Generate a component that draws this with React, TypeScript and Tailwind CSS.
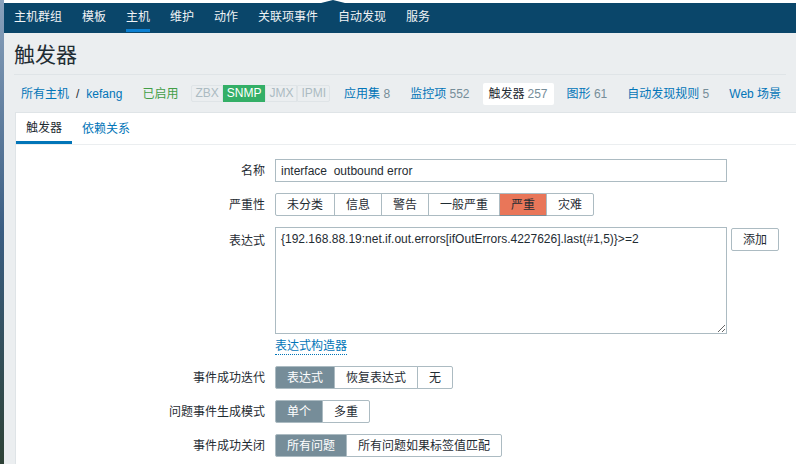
const font = "font-['Liberation_Sans','Noto_Sans_CJK_SC',sans-serif]";

const menu = ["主机群组", "模板", "主机", "维护", "动作", "关联项事件", "自动发现", "服务"];

const Segmented = ({ items, active, activeClass }: { items: string[]; active: number; activeClass: string }) => (
  <div className="flex h-[23px]">
    {items.map((it, i) => (
      <div
        key={it}
        className={
          "flex items-center px-[11px] border border-[#acbbc2] -ml-px first:ml-0 first:rounded-l-[2px] last:rounded-r-[2px] " +
          (i === active ? activeClass : "bg-white text-[#1f2c33]")
        }
      >
        {it}
      </div>
    ))}
  </div>
);

const Row = ({ label, children, top }: { label: string; children: React.ReactNode; top?: boolean }) => (
  <div className={"flex " + (top ? "items-start" : "items-center")}>
    <div className={"w-[249px] text-right text-[#1f2c33] " + (top ? "pt-[5px]" : "")}>{label}</div>
    <div className="ml-[10px]">{children}</div>
  </div>
);

export default function App() {
  return (
    <div className={`flex w-[796px] h-[464px] overflow-hidden text-[12px] ${font}`}>
      <div className="w-[4px] shrink-0 bg-gradient-to-b from-[#8aa2bd] via-[#3a5d82] to-[#2e4236]" />
      <div className="flex-1 flex flex-col bg-[#ebeef0] min-w-0">
        <div className="relative h-[3px] bg-white shrink-0">
          <svg className="absolute left-[317px] top-0" width="24" height="3" viewBox="0 0 24 3">
            <polygon points="0,3 12,0 24,3" fill="#0a466a" />
          </svg>
        </div>
        <nav className="flex h-[30px] shrink-0 bg-[#0a466a]">
          {menu.map((m) => (
            <div key={m} className="flex flex-col px-[10px] text-[#f0f3f5]">
              <div className="flex-1 flex items-center pt-[1px]">{m}</div>
              <div className={"h-[3px] mb-px " + (m === "主机" ? "bg-[#0b7fd1]" : "")} />
            </div>
          ))}
        </nav>

        <div className="flex flex-col px-[10px] flex-1 min-h-0">
          <div className="h-[42px] flex items-center border-b border-[#dfe4e7] shrink-0">
            <h1 className="text-[21px] text-[#1f2c33] leading-none pt-[1px]">触发器</h1>
          </div>

          <div className="flex items-center h-[37px] gap-[6px] whitespace-nowrap shrink-0">
            <div className="flex items-center px-[7px] text-[#0275b8]">
              <span>所有主机</span>
              <span className="mx-[7px] text-[#1f2c33]">/</span>
              <span>kefang</span>
            </div>
            <span className="px-[7px] text-[#429e47]">已启用</span>
            <div className="flex mr-[1px] leading-[15px]">
              <span className="px-[3px] border border-[#dfe4e7] text-[#acbbc2] rounded-l-[2px]">ZBX</span>
              <span className="px-[3px] border border-[#34af67] bg-[#34af67] text-white">SNMP</span>
              <span className="px-[3px] border border-[#dfe4e7] text-[#acbbc2]">JMX</span>
              <span className="px-[3px] border border-[#dfe4e7] text-[#acbbc2] rounded-r-[2px]">IPMI</span>
            </div>
            <span className="px-[7px] text-[#0275b8]">应用集 <span className="text-[#768d99]">8</span></span>
            <span className="px-[7px] text-[#0275b8]">监控项 <span className="text-[#768d99]">552</span></span>
            <span className="h-[22px] flex items-center px-[6px] bg-white rounded-[2px] text-[#1f2c33]">触发器 <span className="ml-[3px] text-[#768d99]">257</span></span>
            <span className="px-[7px] text-[#0275b8]">图形 <span className="text-[#768d99]">61</span></span>
            <span className="px-[7px] text-[#0275b8]">自动发现规则 <span className="text-[#768d99]">5</span></span>
            <span className="px-[7px] text-[#0275b8]">Web 场景</span>
          </div>

          <div className="flex-1 bg-white border-l border-t border-[#dfe4e7] -mr-[10px] ml-px">
            <div className="flex h-[32px] border-b border-[#ebeef0]">
              <div className="flex flex-col px-[10px]">
                <div className="flex-1 flex items-center pt-[1px] text-[#1f2c33]">触发器</div>
                <div className="h-[3px] bg-[#0275b8] -mx-[10px]" />
              </div>
              <div className="flex items-center px-[10px] text-[#0275b8]">依赖关系</div>
            </div>

            <div className="flex flex-col gap-[11px] pt-[14px]">
              <Row label="名称">
                <div className="w-[452px] h-[23px] flex items-center px-[5px] border border-[#acbbc2] text-[#1f2c33] whitespace-pre">
                  interface  outbound error
                </div>
              </Row>
              <Row label="严重性">
                <Segmented
                  items={["未分类", "信息", "警告", "一般严重", "严重", "灾难"]}
                  active={4}
                  activeClass="bg-[#e97659] text-[#1f2c33] border-b-[#768d99] z-10 relative"
                />
              </Row>
              <Row label="表达式" top>
                <div className="flex flex-col items-start">
                  <div className="flex items-start gap-[4px]">
                    <textarea
                      readOnly
                      className="w-[452px] h-[107px] block border border-[#acbbc2] px-[5px] py-[4px] text-[#1f2c33] outline-none leading-[14px]"
                      value="{192.168.88.19:net.if.out.errors[ifOutErrors.4227626].last(#1,5)}>=2"
                    />
                    <div className="mt-px h-[23px] flex items-center px-[11px] border border-[#acbbc2] rounded-[2px] text-[#1f2c33]">
                      添加
                    </div>
                  </div>
                  <span className="mt-[5px] h-[16px] text-[#0275b8] border-b border-dotted border-[#0275b8] leading-[15px]">
                    表达式构造器
                  </span>
                </div>
              </Row>
              <Row label="事件成功迭代">
                <Segmented items={["表达式", "恢复表达式", "无"]} active={0} activeClass="bg-[#768d99] text-white border-[#768d99]" />
              </Row>
              <Row label="问题事件生成模式">
                <Segmented items={["单个", "多重"]} active={0} activeClass="bg-[#768d99] text-white border-[#768d99]" />
              </Row>
              <Row label="事件成功关闭">
                <Segmented items={["所有问题", "所有问题如果标签值匹配"]} active={0} activeClass="bg-[#768d99] text-white border-[#768d99]" />
              </Row>
            </div>
          </div>
        </div>
      </div>
    </div>
  );
}
